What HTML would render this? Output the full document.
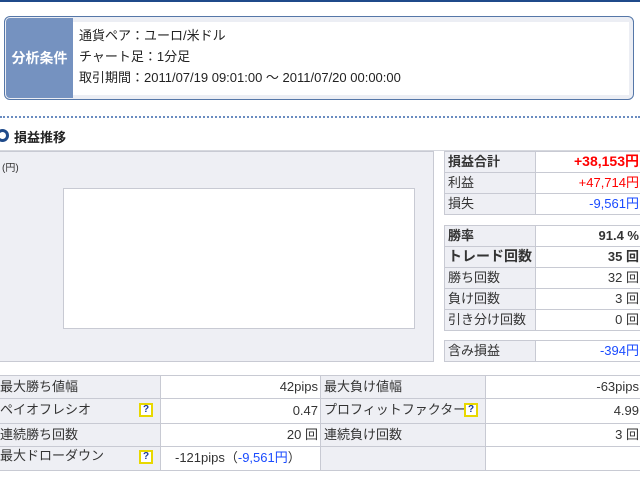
<!DOCTYPE html>
<html><head><meta charset="utf-8"><style>
*{margin:0;padding:0;box-sizing:border-box}
body{width:640px;height:480px;overflow:hidden;background:#fff;font-family:"Liberation Sans","Noto Sans CJK JP",sans-serif;font-size:13px;color:#333;position:relative}
.a{position:absolute}
.cell{position:absolute;border:1px solid #c8cad3;line-height:19px;white-space:nowrap}
.l{background:#eeeff4;padding-left:3px}
.v{background:#fff;text-align:right;padding-right:2px}
.b{font-weight:bold}
.red{color:#f00}.blue{color:#1a4bff}
.q{position:absolute;width:14px;height:14px;border:2px solid #e8d800;background:#fff;color:#1a3a9a;font-size:10px;font-weight:bold;line-height:10px;text-align:center}
</style></head><body>
<div class="a" style="left:0;top:0;width:640px;height:2px;background:#1f4a8a"></div>
<div class="a" style="left:4px;top:16px;width:630px;height:84px;border:1px solid #5577a8;border-radius:6px;background:#eceef4"></div>
<div class="a" style="left:6px;top:18px;width:67px;height:80px;background:#7592c0;border-radius:4px 0 0 4px;color:#fff;font-weight:bold;font-size:14px;line-height:80px;text-align:center">分析条件</div>
<div class="a" style="left:73px;top:22px;width:556px;height:73px;background:#fff"></div>
<div class="a" style="left:79px;top:25px;line-height:21px;font-size:13px;color:#222">通貨ペア：ユーロ/米ドル<br>チャート足：1分足<br>取引期間：2011/07/19 09:01:00 〜 2011/07/20 00:00:00</div>
<div class="a" style="left:0;top:116px;width:640px;border-top:2px dotted #6a8cc0"></div>
<div class="a" style="left:-4px;top:129px;width:13px;height:13px;border:3px solid #1f4a8a;border-radius:50%"></div>
<div class="a b" style="left:14px;top:127px;font-size:13px;color:#222">損益推移</div>
<div class="a" style="left:0;top:150px;width:640px;border-top:1px solid #d6d8de"></div>
<div class="a" style="left:-1px;top:151px;width:435px;height:211px;background:#eeeff4;border:1px solid #c8cad3"></div>
<div class="a" style="left:2px;top:159px;font-size:10px">(円)</div>
<div class="a" style="left:63px;top:188px;width:352px;height:141px;background:#fff;border:1px solid #c8cad3"></div>

<div class="cell l b" style="left:444px;top:151px;width:92px;height:22px">損益合計</div>
<div class="cell v b red" style="left:535px;top:151px;width:107px;height:22px;font-size:14px">+38,153円</div>
<div class="cell l" style="left:444px;top:172px;width:92px;height:22px">利益</div>
<div class="cell v red" style="left:535px;top:172px;width:107px;height:22px">+47,714円</div>
<div class="cell l" style="left:444px;top:193px;width:92px;height:22px">損失</div>
<div class="cell v blue" style="left:535px;top:193px;width:107px;height:22px">-9,561円</div>

<div class="cell l b" style="left:444px;top:225px;width:92px;height:22px">勝率</div>
<div class="cell v b" style="left:535px;top:225px;width:107px;height:22px">91.4 %</div>
<div class="cell l b" style="left:444px;top:246px;width:92px;height:22px;font-size:14px">トレード回数</div>
<div class="cell v b" style="left:535px;top:246px;width:107px;height:22px">35 回</div>
<div class="cell l" style="left:444px;top:267px;width:92px;height:22px">勝ち回数</div>
<div class="cell v" style="left:535px;top:267px;width:107px;height:22px">32 回</div>
<div class="cell l" style="left:444px;top:288px;width:92px;height:22px">負け回数</div>
<div class="cell v" style="left:535px;top:288px;width:107px;height:22px">3 回</div>
<div class="cell l" style="left:444px;top:309px;width:92px;height:22px">引き分け回数</div>
<div class="cell v" style="left:535px;top:309px;width:107px;height:22px">0 回</div>
<div class="cell l" style="left:444px;top:340px;width:92px;height:22px">含み損益</div>
<div class="cell v blue" style="left:535px;top:340px;width:107px;height:22px">-394円</div>

<div class="cell l" style="left:-4px;top:375px;width:165px;height:24px;line-height:21px">最大勝ち値幅</div>
<div class="cell v" style="left:160px;top:375px;width:161px;height:24px;line-height:21px">42pips</div>
<div class="cell l" style="left:320px;top:375px;width:166px;height:24px;line-height:21px">最大負け値幅</div>
<div class="cell v" style="left:485px;top:375px;width:157px;height:24px;line-height:21px">-63pips</div>

<div class="cell l" style="left:-4px;top:398px;width:165px;height:26px;line-height:21px">ペイオフレシオ</div>
<div class="cell v" style="left:160px;top:398px;width:161px;height:26px;line-height:24px">0.47</div>
<div class="cell l" style="left:320px;top:398px;width:166px;height:26px;line-height:21px">プロフィットファクター</div>
<div class="cell v" style="left:485px;top:398px;width:157px;height:26px;line-height:24px">4.99</div>

<div class="cell l" style="left:-4px;top:423px;width:165px;height:24px;line-height:22px">連続勝ち回数</div>
<div class="cell v" style="left:160px;top:423px;width:161px;height:24px;line-height:22px">20 回</div>
<div class="cell l" style="left:320px;top:423px;width:166px;height:24px;line-height:22px">連続負け回数</div>
<div class="cell v" style="left:485px;top:423px;width:157px;height:24px;line-height:22px">3 回</div>

<div class="cell l" style="left:-4px;top:446px;width:165px;height:25px;line-height:18px">最大ドローダウン</div>
<div class="cell v" style="left:160px;top:446px;width:161px;height:25px;line-height:22px;text-align:left;padding-left:14px">-121pips（<span class="blue">-9,561円</span>）</div>
<div class="cell l" style="left:320px;top:446px;width:166px;height:25px"></div>
<div class="cell v" style="left:485px;top:446px;width:157px;height:25px"></div>

<div class="q" style="left:139px;top:403px">?</div>
<div class="q" style="left:464px;top:403px">?</div>
<div class="q" style="left:139px;top:450px">?</div>
</body></html>
